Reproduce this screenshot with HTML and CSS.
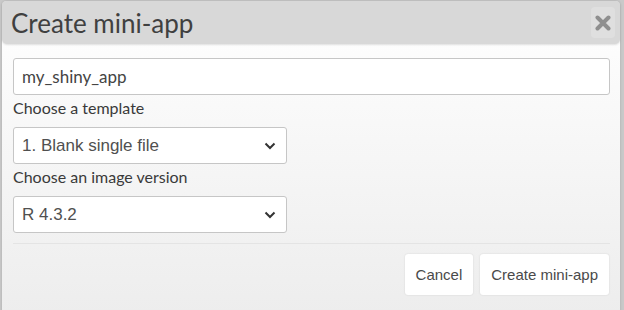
FILE: index.html
```html
<!DOCTYPE html>
<html lang="en">
<head>
  <meta charset="UTF-8">
  <title>Create mini-app</title>
  <link rel="stylesheet" href="styles.css">
</head>
<body>
  <section class="modal">
    <header class="modal-header">
      <h4>Create mini-app</h4>
      <button class="close" type="button" aria-label="Close">
        <svg width="16" height="16" viewBox="0 0 16 16">
          <path d="M2.5 2.5 L13.5 13.5 M13.5 2.5 L2.5 13.5" stroke="#8f8f8f" stroke-width="4" stroke-linecap="round"/>
        </svg>
      </button>
    </header>
    <div class="modal-body">
      <input type="text" class="field" value="my_shiny_app">
      <label class="label">Choose a template</label>
      <div class="select-wrap">
        <select class="select">
          <option>1. Blank single file</option>
        </select>
      </div>
      <label class="label">Choose an image version</label>
      <div class="select-wrap">
        <select class="select">
          <option>R 4.3.2</option>
        </select>
      </div>
    </div>
    <footer class="modal-footer">
      <button class="btn" type="button">Cancel</button>
      <button class="btn" type="button">Create mini-app</button>
    </footer>
  </section>
</body>
</html>
```

FILE: styles.css
```css
body {
  margin: 0;
  padding: 1px 0 0 2px;
  background-color: #c9c9c9;
  font-family: Lato, "Liberation Sans", sans-serif;
  color: #333;
  height: 310px;
  box-sizing: border-box;
  overflow: hidden;
}

.modal {
  width: 618px;
  height: 330px;
  border-radius: 5px;
  background: linear-gradient(to bottom, #ffffff 0%, #ececec 100%);
  box-shadow: 0 0 3px rgba(0, 0, 0, 0.15);
}

.modal-header {
  display: flex;
  justify-content: space-between;
  align-items: center;
  height: 43px;
  padding: 0 5px 0 9px;
  background-color: #d8d8d8;
  border-radius: 4px 4px 5px 5px;
  box-shadow: 0 1px 2px rgba(0, 0, 0, 0.12);
}

.modal-header h4 {
  margin: 0;
  font-size: 26px;
  font-weight: 400;
  color: #404040;
}

.close {
  display: flex;
  align-items: center;
  justify-content: center;
  width: 24px;
  height: 31px;
  padding: 0;
  border: none;
  border-radius: 4px;
  background-color: #dfdfdf;
}

.modal-body {
  display: flex;
  flex-direction: column;
  padding: 14px 10px 0 11px;
}

.field {
  height: 37px;
  box-sizing: border-box;
  border: 1px solid #c6c6c6;
  border-radius: 3px;
  padding: 0 8px;
  font-family: Lato, sans-serif;
  font-size: 17px;
  color: #444;
  background-color: #fff;
}

.label {
  font-size: 16px;
  color: #3a3a3a;
  margin: 5px 0 11px;
  line-height: 16px;
}

.select-wrap {
  width: 274px;
}

.select {
  appearance: none;
  box-sizing: border-box;
  width: 100%;
  height: 37px;
  border: 1px solid #c6c6c6;
  border-radius: 3px;
  padding: 0 30px 0 8px;
  font-family: "Liberation Sans", Arial, sans-serif;
  font-size: 17px;
  color: #505050;
  background-color: #fff;
  background-image: url("data:image/svg+xml;utf8,<svg xmlns='http://www.w3.org/2000/svg' width='12' height='8' viewBox='0 0 12 8'><path d='M1.5 1.5 L6 6 L10.5 1.5' fill='none' stroke='%23333' stroke-width='2'/></svg>");
  background-repeat: no-repeat;
  background-position: right 10px center;
}

.modal-footer {
  display: flex;
  justify-content: flex-end;
  gap: 7px;
  margin: 10px 10px 0 11px;
  padding: 10px 1px 0 0;
  border-top: 1px solid #e4e4e4;
}

.btn {
  height: 41px;
  padding: 0 11px;
  border: none;
  border-radius: 3px;
  background-color: #fff;
  box-shadow: 0 0 2px rgba(0, 0, 0, 0.12);
  font-family: "Liberation Sans", Arial, sans-serif;
  font-size: 15px;
  color: #4a4a4a;
}
```
